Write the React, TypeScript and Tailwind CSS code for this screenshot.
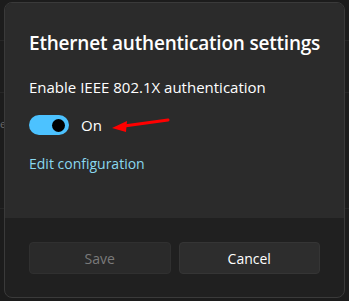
const font = { fontFamily: '"Segoe UI", "Open Sans", "Noto Sans", sans-serif' };

export default function App() {
  return (
    <div className="relative h-[301px] w-[349px] overflow-hidden bg-[#1c1c1c]" style={font}>
      {/* faint page behind the dialog */}
      <div className="absolute left-0 top-[40px] h-px w-full bg-[#262626]" />
      <div className="absolute left-0 top-[92px] h-px w-full bg-[#262626]" />
      <div className="absolute left-0 top-[208px] h-px w-full bg-[#262626]" />
      <div className="absolute left-0 top-[118px] text-[11px] leading-none text-[#6a6a6a]">e</div>

      <div className="absolute left-[4px] top-[2px] flex h-[296px] w-[341px] flex-col overflow-hidden rounded-[8px] border border-[#3a3a3a] bg-[#202020]">
        <div className="flex h-[215px] flex-col bg-[#2b2b2b] px-[24px] pt-[26px]">
          <h1 className="whitespace-nowrap text-[19px] font-semibold leading-[28px] tracking-[-0.2px] text-white">
            Ethernet authentication settings
          </h1>
          <p className="mt-[20px] whitespace-nowrap text-[15px] leading-[20px] text-white">Enable IEEE 802.1X authentication</p>
          <div className="mt-[18px] flex items-center">
            <div className="flex h-[20px] w-[40px] items-center justify-end rounded-full bg-[#4cc2ff] pr-[4px]">
              <div className="h-[13px] w-[13px] rounded-full bg-black" />
            </div>
            <span className="ml-[12px] text-[15px] leading-[20px] text-white">On</span>
            <svg width="62" height="16" viewBox="0 0 62 16" className="ml-[8px]">
              <path d="M58 3 L14 9" stroke="#ff0000" strokeWidth="3" strokeLinecap="round" />
              <path d="M2 11 L17 4 L16 15 Z" fill="#ff0000" />
            </svg>
          </div>
          <a className="mt-[19px] text-[14px] leading-[20px] text-[#8ad8ef]">Edit configuration</a>
        </div>
        <div className="flex gap-[8px] px-[24px] pt-[24px]">
          <button className="h-[32px] flex-1 rounded-[4px] border border-[#303030] bg-[#2a2a2a] text-[14px] text-[#7a7a7a]">
            Save
          </button>
          <button className="h-[32px] flex-1 rounded-[4px] border border-[#353535] bg-[#2d2d2d] text-[14px] text-white">
            Cancel
          </button>
        </div>
      </div>
    </div>
  );
}
